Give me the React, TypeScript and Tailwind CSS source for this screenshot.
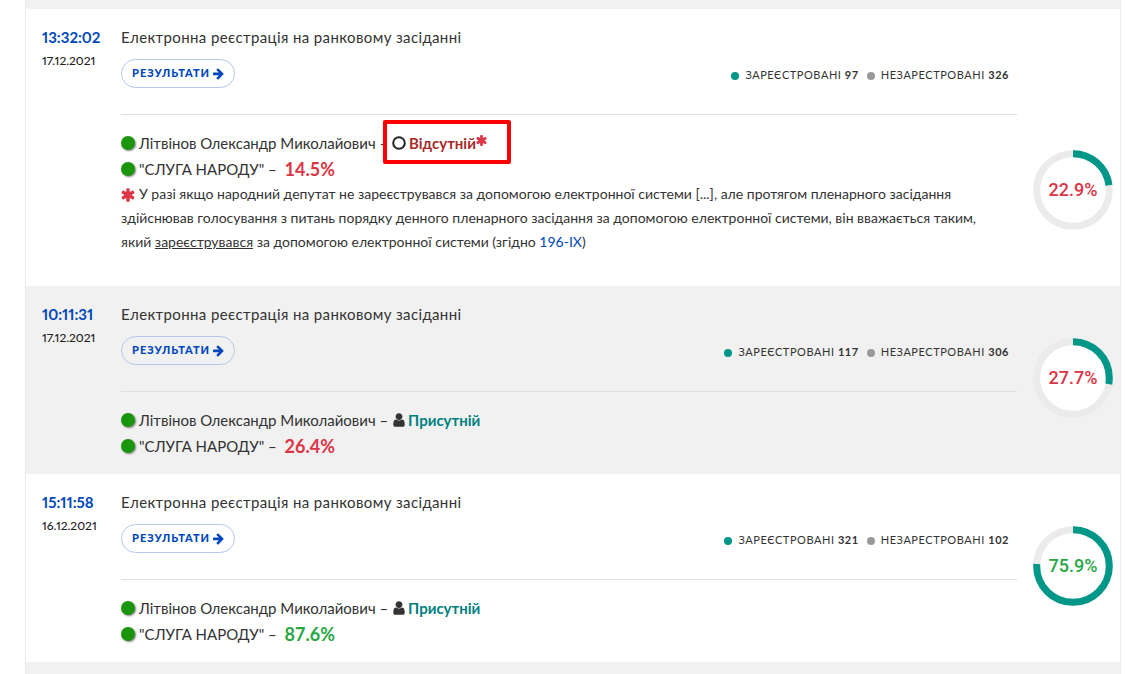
import React from 'react';

interface Session {
  time: string;
  date: string;
  registered: number;
  unregistered: number;
  present: boolean;
  party: string;
  partyGood: boolean;
  total: number;
}

const sessions: Session[] = [
  {
    time: '13:32:02',
    date: '17.12.2021',
    registered: 97,
    unregistered: 326,
    present: false,
    party: '14.5%',
    partyGood: false,
    total: 22.9,
  },
  {
    time: '10:11:31',
    date: '17.12.2021',
    registered: 117,
    unregistered: 306,
    present: true,
    party: '26.4%',
    partyGood: false,
    total: 27.7,
  },
  {
    time: '15:11:58',
    date: '16.12.2021',
    registered: 321,
    unregistered: 102,
    present: true,
    party: '87.6%',
    partyGood: true,
    total: 75.9,
  },
];

const icons = {
  user: 'M1536 1399q0 109-62.5 187t-150.5 78h-854q-88 0-150.5-78t-62.5-187q0-85 8.5-160.5t31.5-152 58.5-131 94-89 134.5-34.5q131 128 313 128t313-128q76 0 134.5 34.5t94 89 58.5 131 31.5 152 8.5 160.5zm-256-887q0 159-112.5 271.5t-271.5 112.5-271.5-112.5-112.5-271.5 112.5-271.5 271.5-112.5 271.5 112.5 112.5 271.5z',
  asterisk:
    'M1546 1050q46 26 59.5 77.5t-12.5 97.5l-64 110q-26 46-77.5 59.5t-97.5-12.5l-266-153v307q0 52-38 90t-90 38h-128q-52 0-90-38t-38-90v-307l-266 153q-46 26-97.5 12.5t-77.5-59.5l-64-110q-26-46-12.5-97.5t59.5-77.5l266-154-266-154q-46-26-59.5-77.5t12.5-97.5l64-110q26-46 77.5-59.5t97.5 12.5l266 153v-307q0-52 38-90t90-38h128q52 0 90 38t38 90v307l266-153q46-26 97.5-12.5t77.5 59.5l64 110q26 46 12.5 97.5t-59.5 77.5l-266 154z',
  arrow:
    'M1600 960q0 54-37 91l-651 651q-39 37-91 37-51 0-90-37l-75-75q-38-38-38-91t38-91l293-293h-704q-52 0-84.5-37.5t-32.5-90.5v-128q0-53 32.5-90.5t84.5-37.5h704l-293-294q-38-36-38-90t38-90l75-75q38-38 90-38 53 0 91 38l651 651q37 35 37 90z',
};

const Icon = ({ name, className }: { name: keyof typeof icons; className: string }) => (
  <svg viewBox="128 0 1536 1792" fill="currentColor" className={className} aria-hidden="true">
    <path d={icons[name]} />
  </svg>
);

const Dot = () => (
  <span className="mr-1 size-[14px] shrink-0 rounded-full bg-[#1a960d] shadow-[1px_1px_2px_rgba(0,0,0,0.5)]" />
);

const Donut = ({ value }: { value: number }) => (
  <div className="grid size-20 shrink-0 place-items-center">
    <svg viewBox="0 0 80 80" className="col-start-1 row-start-1 size-20 -rotate-90">
      <circle cx="40" cy="40" r="36.3" fill="#fff" stroke="#ebebeb" strokeWidth="7" />
      <circle
        cx="40"
        cy="40"
        r="36.3"
        fill="none"
        stroke="#009788"
        strokeWidth="7"
        pathLength="100"
        strokeDasharray={`${value} 100`}
      />
    </svg>
    <span
      className={`z-10 col-start-1 row-start-1 font-['Roboto',sans-serif] text-lg leading-6 font-medium ${
        value > 50 ? 'text-[#28a745]' : 'text-[#dc3545]'
      }`}
    >
      {value}%
    </span>
  </div>
);

const Status = ({ present }: { present: boolean }) =>
  present ? (
    <span className="flex items-center">
      <Icon name="user" className="mr-[2px] h-[16px] w-[14px] text-[#333]" />
      <strong className="text-[#008080]">Присутній</strong>
    </span>
  ) : (
    <span className="relative flex items-center">
      <svg viewBox="0 0 14 14" className="mr-[3px] size-[14px]" aria-hidden="true">
        <circle cx="7" cy="7" r="5.8" fill="none" stroke="#222" strokeWidth="2" />
      </svg>
      <strong className="text-[#a52a2a]">Відсутній</strong>
      <Icon name="asterisk" className="mb-[6px] h-[13px] w-[11px] text-[#dc3545]" />
      <span className="absolute -top-3 -left-[9px] h-11 w-32 rounded-[2px] border-4 border-[#fe0000]" />
    </span>
  );

const SessionRow = ({ s }: { s: Session }) => (
  <article className="flex pt-4 pr-[7px] pl-4 odd:bg-white">
    <div className="w-[79px] shrink-0 proportional-nums">
      <div className="text-[15px] leading-6 font-bold text-[#0047bb]">{s.time}</div>
      <div className="text-[12px] leading-6 font-medium text-[#222]">{s.date}</div>
    </div>

    <div className="min-w-0 flex-1 pb-[15px]">
      <h3 className="text-[15px] leading-6 tracking-wide">Електронна реєстрація на ранковому засіданні</h3>
      <div className="mt-[10px] flex items-center justify-between">
        <button
          type="button"
          className="flex h-[29px] cursor-pointer items-center gap-[3px] rounded-full border border-[#b3c8ea] px-[10px] text-[11px] font-black tracking-[1px] text-[#0047bb]"
        >
          РЕЗУЛЬТАТИ
          <Icon name="arrow" className="h-[13px] w-[11px]" />
        </button>
        <div className="mr-2 flex items-center pt-1 text-[11px] tracking-wider">
          <span className="mr-[6px] size-2 rounded-full bg-[#009788]" />
          ЗАРЕЄСТРОВАНІ&nbsp;<b>{s.registered}</b>
          <span className="mr-[6px] ml-2 size-2 rounded-full bg-[#999]" />
          НЕЗАРЕСТРОВАНІ&nbsp;<b>{s.unregistered}</b>
        </div>
      </div>

      <hr className="mt-[26px] mb-[15px] border-[#dedede]" />

      <div className="flex h-[26px] items-center text-[15px]">
        <Dot />
        Літвінов Олександр Миколайович –&nbsp;
        <Status present={s.present} />
      </div>
      <div className="flex h-[26px] items-center text-[15px]">
        <Dot />
        "СЛУГА НАРОДУ" –&nbsp;
        <strong className={`ml-1 text-lg leading-6 ${s.partyGood ? 'text-[#28a745]' : 'text-[#dc3545]'}`}>{s.party}</strong>
      </div>
      {!s.present && (
        <p className="mb-[17px] text-[14px] leading-6">
          <Icon name="asterisk" className="mr-1 inline h-4 w-[14px] text-[#dc3545]" />У разі якщо народний депутат не
          зареєструвався за допомогою електронної системи [...], але протягом пленарного засідання
          <br />
          здійснював голосування з питань порядку денного пленарного засідання за допомогою електронної системи, він
          вважається таким,
          <br />
          який <u>зареєструвався</u> за допомогою електронної системи (згідно{' '}
          <a href="#196-IX" className="text-[#0047bb]">
            196-IX
          </a>
          )
        </p>
      )}
    </div>

    <div className="flex shrink-0 items-end pb-14 pl-4">
      <Donut value={s.total} />
    </div>
  </article>
);

const App: React.FC = () => (
  <main className="mr-[10px] ml-[25px] border-x border-[#ebebeb] bg-[#f1f1f1] pt-[9px] pb-3 font-['Lato',sans-serif] text-[#333]">
    {sessions.map((s) => (
      <SessionRow key={s.time} s={s} />
    ))}
  </main>
);

export default App;
